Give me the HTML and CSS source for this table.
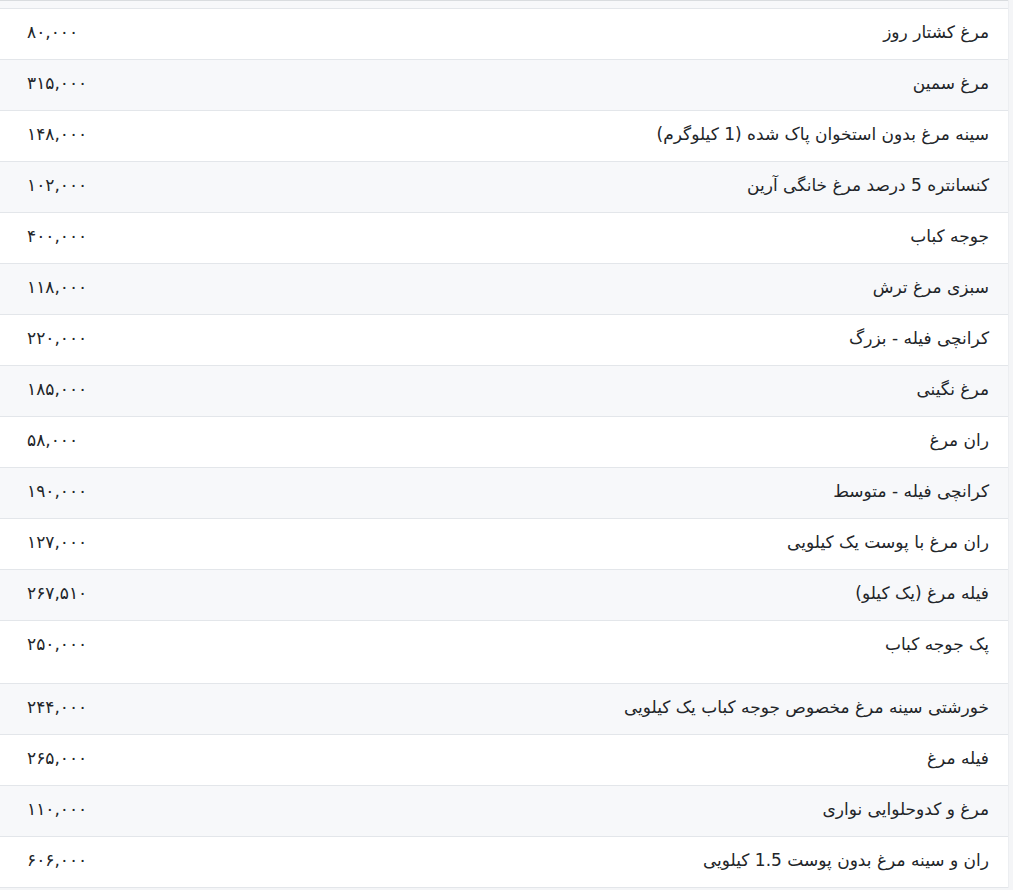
FILE: index.html
```html
<!DOCTYPE html>
<html lang="fa" dir="rtl">
<head>
<meta charset="utf-8">
<title>قیمت مرغ</title>
<link rel="stylesheet" href="styles.css">
</head>
<body>
<div class="sheet">
  <div class="cut-row"></div>
  <table class="prices">
    <tbody>
      <tr><td class="name">مرغ کشتار روز</td><td class="price">۸۰,۰۰۰</td></tr>
      <tr><td class="name">مرغ سمین</td><td class="price">۳۱۵,۰۰۰</td></tr>
      <tr><td class="name">سینه مرغ بدون استخوان پاک شده (1 کیلوگرم)</td><td class="price">۱۴۸,۰۰۰</td></tr>
      <tr><td class="name">کنسانتره 5 درصد مرغ خانگی آرین</td><td class="price">۱۰۲,۰۰۰</td></tr>
      <tr><td class="name">جوجه کباب</td><td class="price">۴۰۰,۰۰۰</td></tr>
      <tr><td class="name">سبزی مرغ ترش</td><td class="price">۱۱۸,۰۰۰</td></tr>
      <tr><td class="name">کرانچی فیله - بزرگ</td><td class="price">۲۲۰,۰۰۰</td></tr>
      <tr><td class="name">مرغ نگینی</td><td class="price">۱۸۵,۰۰۰</td></tr>
      <tr><td class="name">ران مرغ</td><td class="price">۵۸,۰۰۰</td></tr>
      <tr><td class="name">کرانچی فیله - متوسط</td><td class="price">۱۹۰,۰۰۰</td></tr>
      <tr><td class="name">ران مرغ با پوست یک کیلویی</td><td class="price">۱۲۷,۰۰۰</td></tr>
      <tr><td class="name">فیله مرغ (یک کیلو)</td><td class="price">۲۶۷,۵۱۰</td></tr>
      <tr class="tall"><td class="name">پک جوجه کباب</td><td class="price">۲۵۰,۰۰۰</td></tr>
      <tr><td class="name">خورشتی سینه مرغ مخصوص جوجه کباب یک کیلویی</td><td class="price">۲۴۴,۰۰۰</td></tr>
      <tr><td class="name">فیله مرغ</td><td class="price">۲۶۵,۰۰۰</td></tr>
      <tr><td class="name">مرغ و کدوحلوایی نواری</td><td class="price">۱۱۰,۰۰۰</td></tr>
      <tr><td class="name">ران و سینه مرغ بدون پوست 1.5 کیلویی</td><td class="price">۶۰۶,۰۰۰</td></tr>
    </tbody>
  </table>
</div>
</body>
</html>
```
FILE: styles.css
```css
html, body {
  margin: 0;
  padding: 0;
}
body {
  background: #f4f5f7;
  font-family: "DejaVu Sans", "Noto Sans", sans-serif;
  color: #222529;
  overflow: hidden;
}
.sheet {
  width: 1009px;
  margin-right: auto;
  margin-left: 0;
  background: #fff;
  border-right: 1px solid #eceef1;
  box-sizing: border-box;
}
.cut-row {
  height: 7px;
  background: #f7f8fa;
  border-top: 1px solid #d9dcdf;
}
.prices {
  width: 100%;
  border-collapse: collapse;
}
.prices tr {
  height: 51px;
  border-top: 1px solid #e3e6ea;
}
.prices tr:nth-child(even) {
  background: #f7f8fa;
}
.prices tr:last-child {
  border-bottom: 1px solid #e3e6ea;
}
.prices tr.tall {
  height: 63px;
}
.prices td {
  vertical-align: top;
  padding: 11px 0 0;
  font-size: 17px;
  line-height: 24px;
}
.name {
  text-align: right;
  padding-right: 19px !important;
}
.price {
  text-align: left;
  padding-left: 27px !important;
  width: 200px;
  font-size: 15px;
}
```
